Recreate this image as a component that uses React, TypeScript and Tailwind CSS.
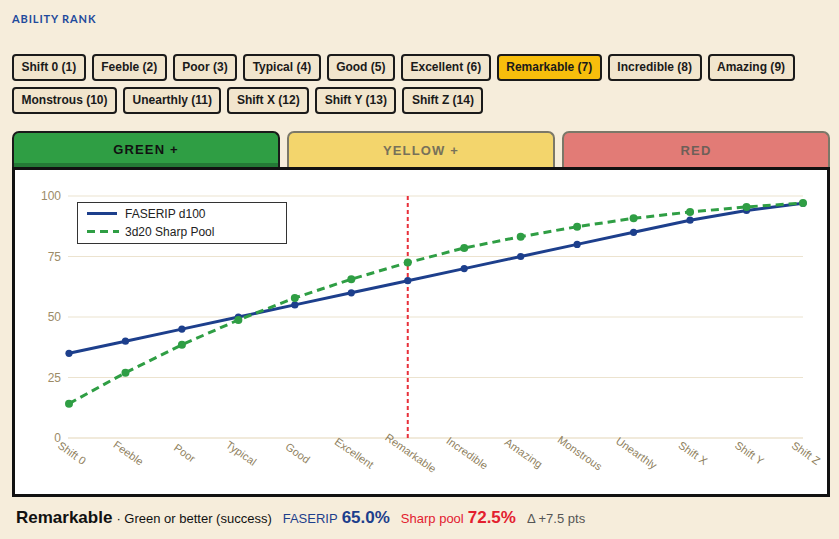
const RANKS = [
  "Shift 0",
  "Feeble",
  "Poor",
  "Typical",
  "Good",
  "Excellent",
  "Remarkable",
  "Incredible",
  "Amazing",
  "Monstrous",
  "Unearthly",
  "Shift X",
  "Shift Y",
  "Shift Z",
];

const FASERIP = [35, 40, 45, 50, 55, 60, 65, 70, 75, 80, 85, 90, 94, 97];
const SHARP = [14.2, 27, 38.5, 48.8, 57.9, 65.6, 72.5, 78.5, 83.2, 87.3, 90.8, 93.4, 95.5, 97.1];

const SELECTED = 6;

// chart coords are relative to the panel's inner box
const X0 = 54;
const STEP = 56.46;
const Y0 = 268; // value 0
const YSCALE = 2.42;
const px = (i: number) => X0 + i * STEP;
const py = (v: number) => Y0 - v * YSCALE;

function pathOf(vals: number[]) {
  return vals.map((v, i) => `${i === 0 ? "M" : "L"}${px(i).toFixed(1)},${py(v).toFixed(1)}`).join(" ");
}

function Chart() {
  const grid = [0, 25, 50, 75, 100];
  return (
    <svg width="812" height="324" viewBox="0 0 812 324" style={{ fontFamily: '"Liberation Sans", Arial, sans-serif' }}>
      {grid.map((g) => (
        <g key={g}>
          <line x1={53} x2={788} y1={py(g)} y2={py(g)} stroke={g === 0 ? "#e4d6b8" : "#ece3cf"} strokeWidth="1.2" />
          <text x={46} y={py(g) + 4} textAnchor="end" fontSize="12" fill="#9c8b68">
            {g}
          </text>
        </g>
      ))}

      <line x1={px(SELECTED)} x2={px(SELECTED)} y1={py(100)} y2={py(0)} stroke="#e8303a" strokeWidth="2" strokeDasharray="4 3" />

      <path d={pathOf(FASERIP)} fill="none" stroke="#1d3f8c" strokeWidth="3" strokeLinejoin="round" />
      {FASERIP.map((v, i) => (
        <circle key={i} cx={px(i)} cy={py(v)} r="3.6" fill="#1d3f8c" />
      ))}

      <path d={pathOf(SHARP)} fill="none" stroke="#2f9e44" strokeWidth="3" strokeDasharray="8 5" />
      {SHARP.map((v, i) => (
        <circle key={i} cx={px(i)} cy={py(v)} r="4" fill="#2f9e44" />
      ))}

      {RANKS.map((r, i) => (
        <text
          key={r}
          x={px(i) + 3}
          y={287}
          textAnchor="middle"
          fontSize="11"
          fill="#8f7f5e"
          transform={`rotate(35 ${px(i) + 3} 283)`}
        >
          {r}
        </text>
      ))}

      <rect x={62.5} y={32.5} width={209} height={41} fill="#fff" stroke="#333" strokeWidth="1" />
      <line x1={72} x2={102} y1={43.5} y2={43.5} stroke="#1d3f8c" strokeWidth="3" />
      <text x={110} y={48} fontSize="12" fill="#222">
        FASERIP d100
      </text>
      <line x1={72} x2={104} y1={61.5} y2={61.5} stroke="#2f9e44" strokeWidth="3" strokeDasharray="8 5" />
      <text x={110} y={66} fontSize="12" fill="#222">
        3d20 Sharp Pool
      </text>
    </svg>
  );
}

export default function App() {
  return (
    <div
      className="w-[839px] h-[539px] bg-[#f6eddb] pl-3 pt-[11px] text-[#1a1a1a] overflow-hidden"
      style={{ fontFamily: '"Liberation Sans", Arial, sans-serif' }}
    >
      <div className="text-[11px] leading-[16px] font-bold tracking-[0.08em] text-[#1f4a9c] font-['Lato',sans-serif]">
        ABILITY RANK
      </div>

      <div className="mt-[27px] flex flex-wrap gap-[6px] w-[800px]">
        {RANKS.map((r, i) => (
          <button
            key={r}
            className={
              i === SELECTED
                ? "h-[27px] px-[7.5px] border-2 border-[#1a1a1a] rounded-[4px] bg-[#f7be0c] text-[12px] font-bold leading-[15px] text-[#1a1a1a]"
                : "h-[27px] px-[7.5px] border-2 border-[#1a1a1a] rounded-[4px] bg-[#f1e5cd] text-[12px] font-bold leading-[15px] text-[#1a1a1a]"
            }
          >
            {r} ({i + 1})
          </button>
        ))}
      </div>

      <div className="mt-[17px] w-[818px]">
        <div className="flex gap-[7px] h-[36px]">
          <div className="flex-1 flex flex-col rounded-t-[7px] border-2 border-b-0 border-[#1a1a1a] bg-[#2f9e44] overflow-hidden">
            <div className="flex-1 flex items-center justify-center pt-[4px] text-[13px] font-bold tracking-[0.09em] text-[#111]">
              GREEN +
            </div>
            <div className="h-[4px] bg-[#247a36]" />
          </div>
          <div className="flex-1 flex items-center justify-center pt-[2px] rounded-t-[7px] border-2 border-b-0 border-[#7b7868] bg-[#f3d56c] text-[13px] font-bold tracking-[0.09em] text-[#77715a]">
            YELLOW +
          </div>
          <div className="flex-1 flex items-center justify-center pt-[2px] rounded-t-[7px] border-2 border-b-0 border-[#7b7868] bg-[#e27b76] text-[13px] font-bold tracking-[0.09em] text-[#6e5f58]">
            RED
          </div>
        </div>

        <div className="border-[3px] border-[#111] bg-white">
          <Chart />
        </div>
      </div>

      <div className="mt-[8px] pl-1 flex items-baseline gap-[11px] text-[13px]">
        <div className="flex items-baseline gap-[4px]">
          <span className="text-[17px] font-bold text-[#111]">Remarkable</span>
          <span className="text-[#111]">· Green or better (success)</span>
        </div>
        <div className="flex items-baseline gap-[4px] text-[#1d3f8c]">
          <span>FASERIP</span>
          <span className="text-[17px] font-bold">65.0%</span>
        </div>
        <div className="flex items-baseline gap-[4px] text-[#e3202f]">
          <span>Sharp pool</span>
          <span className="text-[17px] font-bold">72.5%</span>
        </div>
        <span className="text-[#555]">Δ +7.5 pts</span>
      </div>
    </div>
  );
}
